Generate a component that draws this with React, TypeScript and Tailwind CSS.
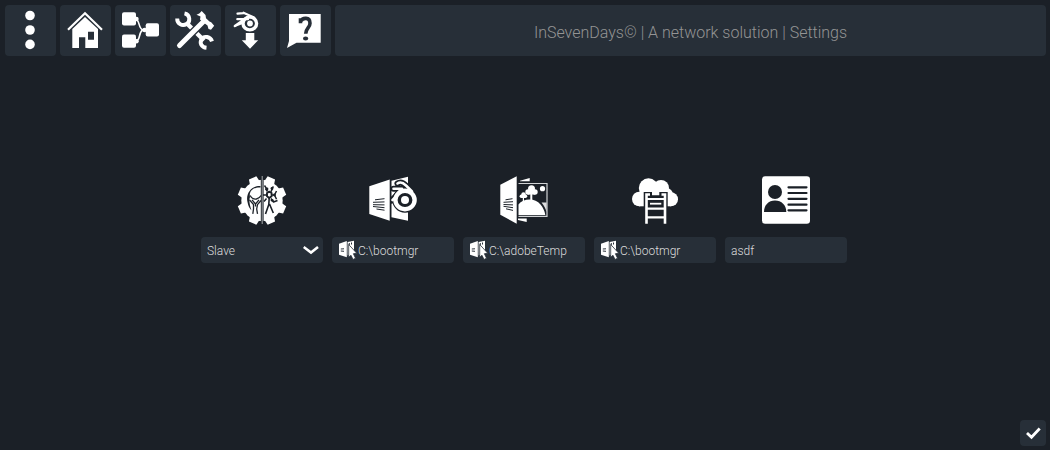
import { useState } from "react";
import type { ReactNode } from "react";

const PANEL = "#272f38";
const PAGE = "#1b2027";

function MenuIcon() {
  return (
    <svg viewBox="0 0 51 51" className="size-full" fill="#fff" aria-hidden="true">
      <circle cx="25" cy="10.5" r="4.8" />
      <circle cx="25" cy="25" r="4.8" />
      <circle cx="25" cy="39.4" r="4.8" />
    </svg>
  );
}

function HomeIcon() {
  return (
    <svg viewBox="0 0 51 51" className="size-full" aria-hidden="true">
      <path d="M8 24.8 25 8.3 42 24.8" fill="none" stroke="#fff" strokeWidth="2.2" />
      <path
        fillRule="evenodd"
        fill="#fff"
        d="M12.3 24 25 12 38 24V43H25.3V32.3H19V43H12.3ZM28 26.7V34.7H34V26.7Z"
      />
    </svg>
  );
}

function NodesIcon() {
  return (
    <svg viewBox="0 0 51 51" className="size-full" fill="#fff" aria-hidden="true">
      <rect x="7" y="7.2" width="14" height="13.3" rx="2" />
      <rect x="7" y="29.5" width="14" height="13.3" rx="2" />
      <rect x="30.7" y="18.3" width="13.3" height="13.3" rx="2" />
      <path
        d="M20 14C25 14 23 23 27.5 24.7H32M20 36.5C26 36.5 23 28 27.5 25"
        fill="none"
        stroke="#fff"
        strokeWidth="1.6"
      />
      <circle cx="21.5" cy="14" r="2.2" />
      <circle cx="21.5" cy="36.3" r="2.2" />
      <circle cx="29.5" cy="25" r="2.2" />
    </svg>
  );
}

function ToolsIcon() {
  return (
    <svg viewBox="0 0 51 51" className="size-full" aria-hidden="true">
      <g fill="none" stroke="#fff">
        <path d="M14.5 8.3C20.5 9.5 20.5 17 16.5 19 12 21.5 7 18.5 7.2 13.5" strokeWidth="3.9" />
        <path d="M16.5 18 34 35.5" strokeWidth="4.2" />
        <path d="M42 36.3C40.5 31.5 34 30.5 31.7 34 29.2 38 31.5 42.3 36.5 42.8" strokeWidth="3.9" />
      </g>
      <path d="M10 40 32 18" stroke={PANEL} strokeWidth="7.5" />
      <path d="M9.5 40.5 34 16" stroke="#fff" strokeWidth="5" strokeLinecap="round" />
      <path
        d="M26.5 9.7C29 9 30.5 7.5 31.7 6L35.5 10 36 13.2 39.5 16.5 41.2 17.2 44.2 20.7 41 24.7 38.5 24 37.5 20.5 33.5 17.5 30 14.5 30.5 11.5Z"
        fill="#fff"
      />
    </svg>
  );
}

function BlenderDownIcon() {
  return (
    <svg viewBox="0 0 51 51" className="size-full" aria-hidden="true">
      <path
        d="M12.3 14.2H23M18.5 7.7 29 12.5M12.5 8.7 18.5 8.2M9.8 21 22 12.5"
        fill="none"
        stroke="#fff"
        strokeWidth="2.2"
        strokeLinecap="round"
      />
      <path d="M8.5 21.8 20 13 19 18.5 10 22Z" fill="#fff" />
      <ellipse cx="24.8" cy="18.5" rx="6.8" ry="6.4" fill="none" stroke="#fff" strokeWidth="3.4" />
      <circle cx="25" cy="18.5" r="2.9" fill="#fff" />
      <path d="M20.8 28H29.3V35.2H33.2L25 43.7 16.8 35.2H20.8Z" fill="#fff" />
    </svg>
  );
}

function HelpIcon() {
  return (
    <svg viewBox="0 0 51 51" className="size-full" aria-hidden="true">
      <path d="M9 9H40.7V37.8H16.5L7 43 9 36Z" fill="#fff" />
      <path
        d="M20.5 13.2V18.3M21 16C22.3 12.8 30 11.5 30 18.2 30 22.8 25.7 23 25.7 28.8"
        fill="none"
        stroke={PANEL}
        strokeWidth="3.6"
      />
      <ellipse cx="25.6" cy="33.5" rx="2.6" ry="2" fill={PANEL} />
    </svg>
  );
}

function GearIcon() {
  return (
    <svg viewBox="0 0 50 50" className="size-[50px]" aria-hidden="true">
      <g fill="#fff">
        <circle cx="25" cy="24.5" r="20.7" />
        {[22.5, 67.5, 112.5, 157.5].map((angle) => (
          <path
            key={angle}
            transform={`rotate(${angle} 25 24.5)`}
            d="M20 5 21 0H29L30 5V44L29 49H21L20 44Z"
          />
        ))}
      </g>
      <path
        d="M23.5 10C14 9.5 8.5 18 10.5 26 11.2 30 12.5 32.3 14.5 34.5 12.5 28 11.8 24 13 21 11.8 16 15.5 11 23.5 11.5Z"
        fill={PAGE}
      />
      <g fill="none" stroke={PAGE} strokeWidth="1.3" strokeLinejoin="round">
        <path d="M13.2 19.5C14.5 22 17 23.3 19.5 23 21.8 22.7 23 21.3 24 19.5" />
        <path d="M12.5 23.8 16.5 28.5V33L15.8 37.8M15 23.8 18.5 28 22 23.8M18.5 28V30.5M24 24.5 20.5 28.7 19.7 33 20.5 37.8" />
        <path d="M27.5 9.5 30 13.3M36.5 10.5 34.3 13M38 19H34.5M39.5 15 37.5 19 39.5 23.3M34 22.5 36.5 26 40.5 24.5M29.5 22.5 27 25.5" strokeWidth="1.5" />
        <path d="M30 17 32.2 15.6 34.6 17V20.2L32.2 22 30 20.2Z" strokeWidth="1.9" />
        <path d="M26 19H30M30.5 15.5 28.5 12.5M34 15.8 35.3 12.5M32.2 22 31.8 28.5 28.5 38M32.5 28 36.3 37" strokeWidth="1.6" />
      </g>
      <g fill={PAGE}>
        <circle cx="30" cy="13" r="1.4" />
        <circle cx="35" cy="12.5" r="1.4" />
        <circle cx="37.5" cy="19" r="1.4" />
        <circle cx="35.2" cy="24.3" r="1.4" />
      </g>
      <path d="M25.2 0V48" stroke={PAGE} strokeWidth="2.8" />
      <path d="M25.2 0V48" stroke="#a5a8ab" strokeWidth="1" />
    </svg>
  );
}

function BlenderFolderIcon() {
  return (
    <svg viewBox="0 0 50 50" className="size-[50px]" aria-hidden="true">
      <path d="M23.5 4.7 40 .8V44.7L23.5 41.3Z" fill="#fff" />
      <g fill="none" stroke={PAGE} strokeWidth="6" strokeLinecap="round">
        <path d="M29.5 7.5C32.5 5.3 36 7.5 38 9.5L44 15.5M25.5 12.8H34M23.5 24.5 34 14.5" />
        <circle cx="37" cy="24" r="9.7" />
      </g>
      <path d="M1.3 10.3 21.7 3.5V44.8L1.3 38Z" fill="#fff" />
      <path
        d="M7 23.8 16.5 22.7M5 26.3 16.5 25.9M5 28.7 16.5 28.9M5 30.5 16.5 31.7M8.5 33 16.5 34.2"
        stroke={PAGE}
        strokeWidth="1"
      />
      <circle cx="37" cy="24" r="9" fill={PAGE} />
      <path
        d="M29.5 7.5C32.5 5.3 36 7.5 38 9.5L44 15.5M25.5 12.8H34M24.5 24 34.5 14.5"
        fill="none"
        stroke="#fff"
        strokeWidth="2.6"
        strokeLinecap="round"
      />
      <ellipse cx="37" cy="24" rx="9.6" ry="9.2" fill="none" stroke="#fff" strokeWidth="4.4" />
      <circle cx="37" cy="24" r="4" fill="#fff" />
    </svg>
  );
}

function PictureFolderIcon() {
  return (
    <svg viewBox="0 0 50 50" className="size-[50px]" aria-hidden="true">
      <path d="M21 4.7 30.7 2V5.2H21ZM19 42.5H27.7V46L19 44Z" fill="#fff" />
      <path d="M19.5 7.5H48V40.3H19.5" fill="none" stroke="#d0d2d4" strokeWidth="1.2" />
      <g fill="#fff">
        <circle cx="43.5" cy="12.7" r="2.6" />
        <circle cx="32.5" cy="12.8" r="3.5" />
        <circle cx="29" cy="16" r="2.7" />
        <circle cx="36" cy="16" r="2.7" />
        <path d="M29 15H36V18.5H33.3V24H31.3V18.5H29Z" />
        <circle cx="24.5" cy="18.5" r="2.2" />
        <circle cx="22.3" cy="20.3" r="1.7" />
        <circle cx="26.5" cy="20.3" r="1.7" />
        <path d="M22.3 20H26.5V22H25V26H23.8V22H22.3Z" />
        <path d="M19.5 28.5C24 22.5 36 21.5 41.5 28.5 44 31.5 45.7 35 46.3 39H19.5Z" />
        <path d="M42.5 26.5H47.5V36C46.5 32 45 29.5 42.5 26.5Z" opacity=".85" />
      </g>
      <path d="M1.3 8.7 17.7 .3V47.7L1.3 38.7Z" fill="#fff" />
      <path
        d="M6.5 23.8 13.5 22.7M4.5 26.3 14 25.7M4.5 28.5 14 28.9M4.5 30.3 14 31.7M7 32.8 14 34.4"
        stroke={PAGE}
        strokeWidth="1"
      />
    </svg>
  );
}

function CloudLadderIcon() {
  return (
    <svg viewBox="0 0 50 50" className="size-[50px]" aria-hidden="true">
      <g fill="#fff">
        <circle cx="18.5" cy="12" r="9.7" />
        <circle cx="31" cy="12" r="8" />
        <circle cx="9.3" cy="23" r="7.3" />
        <circle cx="41" cy="23.3" r="7" />
        <circle cx="36.5" cy="18.5" r="6.5" />
        <path d="M9 16H41V30.3H9Z" />
      </g>
      <path d="M13.7 16H22V19.3H29.3V16H37.7V31H13.7Z" fill={PAGE} />
      <g fill="none" stroke="#fff">
        <path d="M16.5 47.7V18.5H20M35 47.7V18.5H31.5" strokeWidth="2.6" />
        <path d="M17 23H35M17 32.7H35M17 41.3H35" strokeWidth="2.2" />
        <path d="M20 27.7H31.3" strokeWidth="1.8" />
      </g>
    </svg>
  );
}

function ContactCardIcon() {
  return (
    <svg viewBox="0 0 50 50" className="size-[50px]" aria-hidden="true">
      <rect x="1" y=".3" width="48" height="47.5" rx="3.2" fill="#fff" />
      <circle cx="14" cy="16" r="7" fill={PAGE} />
      <path d="M3 36C3 29 7.5 24.5 14 24.5S25.3 29 25.3 36Z" fill={PAGE} />
      <path
        d="M27.5 11.3H45.5M27.5 17H45.5M27.5 22.8H45.5M27.5 28.7H45.5M27.5 34.3H45.5"
        stroke={PAGE}
        strokeWidth="2.2"
        strokeLinecap="round"
      />
    </svg>
  );
}

function BrowseIcon() {
  return (
    <svg viewBox="0 0 20 20" className="size-5" aria-hidden="true">
      <path d="M1 3.8 8.8 1V17.2L1 14.7Z" fill="#fff" />
      <path d="M9.6 2 16 .8V12L9.6 15.5Z" fill="#fff" />
      <path
        d="M2.8 9 6 8.8M2.8 11 6 11.3M11.3 3V5.3M13.5 2.5V4.5"
        fill="none"
        stroke={PANEL}
        strokeWidth="1"
      />
      <path
        d="M10.7 4.5 18.8 13.3 15.4 13.7 17.5 18.2 15 19.5 13 15.3 10.7 17.3Z"
        fill="#fff"
        stroke={PANEL}
        strokeWidth=".8"
      />
    </svg>
  );
}

const TOOLBAR: { label: string; icon: ReactNode }[] = [
  { label: "Menu", icon: <MenuIcon /> },
  { label: "Home", icon: <HomeIcon /> },
  { label: "Nodes", icon: <NodesIcon /> },
  { label: "Tools", icon: <ToolsIcon /> },
  { label: "Blender download", icon: <BlenderDownIcon /> },
  { label: "Help", icon: <HelpIcon /> },
];

function Setting({ icon, children }: { icon: ReactNode; children: ReactNode }) {
  return (
    <div className="flex w-[122px] flex-col items-center gap-[11px]">
      {icon}
      <div className="relative flex h-[26px] w-full items-center rounded-[4px] bg-[#272f38] text-xs font-light text-[#dddddd]">
        {children}
      </div>
    </div>
  );
}

function PathField({ label, initial }: { label: string; initial: string }) {
  const [value, setValue] = useState(initial);
  return (
    <>
      <button type="button" aria-label={`Browse ${label}`} className="ml-1.5 shrink-0">
        <BrowseIcon />
      </button>
      <input
        aria-label={label}
        value={value}
        onChange={(e) => setValue(e.target.value)}
        className="h-full w-full min-w-0 bg-transparent pt-0.5 outline-none"
      />
    </>
  );
}

export default function App() {
  const [role, setRole] = useState("Slave");
  const [name, setName] = useState("asdf");

  return (
    <div className="flex min-h-screen flex-col bg-[#1b2027] pt-[5px] pr-1 pb-1 pl-[5px] font-['Roboto',sans-serif]">
      <header className="flex gap-1">
        <nav className="flex gap-1">
          {TOOLBAR.map(({ label, icon }) => (
            <button
              key={label}
              type="button"
              aria-label={label}
              className="size-[51px] rounded-[4px] bg-[#272f38]"
            >
              {icon}
            </button>
          ))}
        </nav>
        <h1 className="flex flex-1 items-center justify-center rounded-[4px] bg-[#272f38] pt-1 text-base font-light text-[#949494]">
          InSevenDays© | A network solution | Settings
        </h1>
      </header>

      <main className="flex flex-1 items-center justify-center pr-[3px] pb-[37px]">
        <div className="flex gap-[9px]">
          <Setting icon={<GearIcon />}>
            <select
              aria-label="Role"
              value={role}
              onChange={(e) => setRole(e.target.value)}
              className="h-full w-full appearance-none bg-transparent pt-0.5 pl-1.5 outline-none"
            >
              <option>Slave</option>
              <option>Master</option>
            </select>
            <svg
              viewBox="0 0 16 10"
              className="pointer-events-none absolute right-1 h-2.5 w-4"
              aria-hidden="true"
            >
              <path d="M.7 2 8 7.5 15 2" fill="none" stroke="#fff" strokeWidth="2.6" />
            </svg>
          </Setting>
          <Setting icon={<BlenderFolderIcon />}>
            <PathField label="Blender folder" initial="C:\bootmgr" />
          </Setting>
          <Setting icon={<PictureFolderIcon />}>
            <PathField label="Image folder" initial="C:\adobeTemp" />
          </Setting>
          <Setting icon={<CloudLadderIcon />}>
            <PathField label="Cloud folder" initial="C:\bootmgr" />
          </Setting>
          <Setting icon={<ContactCardIcon />}>
            <input
              aria-label="Name"
              value={name}
              onChange={(e) => setName(e.target.value)}
              className="h-full w-full bg-transparent px-1.5 pt-0.5 outline-none"
            />
          </Setting>
        </div>
      </main>

      <footer className="flex justify-end">
        <button
          type="button"
          aria-label="Apply settings"
          className="flex size-[26px] items-center justify-center rounded-[4px] bg-[#272f38]"
        >
          <svg viewBox="0 0 16 14" className="h-3.5 w-4" aria-hidden="true">
            <path d="M2 7 6.5 11.3 14.7 2.5" fill="none" stroke="#fff" strokeWidth="2.8" />
          </svg>
        </button>
      </footer>
    </div>
  );
}
